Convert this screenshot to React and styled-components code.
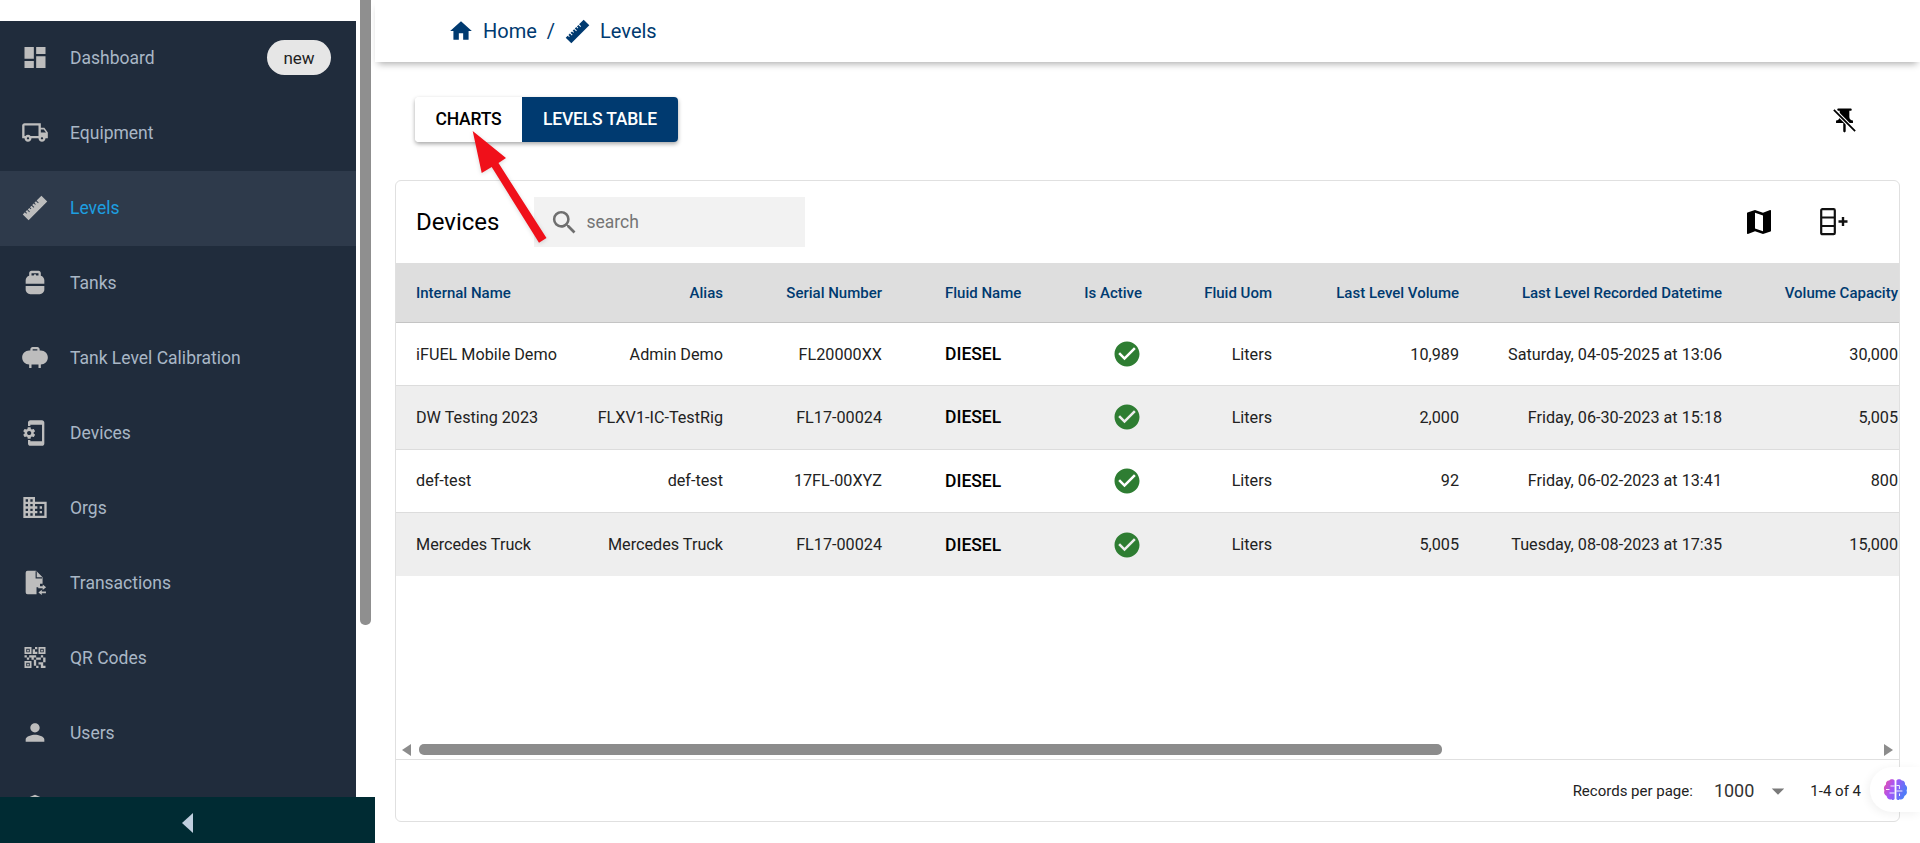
import React from "react";
import styled, { createGlobalStyle } from "styled-components";
import {
  MdDashboard,
  MdOutlineLocalShipping,
  MdPropaneTank,
  MdPropane,
  MdPhonelinkSetup,
  MdDomain,
  MdQrCode2,
  MdPerson,
  MdHome,
  MdMap,
  MdSearch,
  MdCheckCircle,
  MdArrowDropDown,
  MdLocalPolice,
} from "react-icons/md";

const GlobalStyle = createGlobalStyle`
  html, body {
    margin: 0;
    height: 100%;
    background: #fff;
    overflow: hidden;
    font-family: Roboto, "Liberation Sans", sans-serif;
  }
  * { box-sizing: border-box; }
`;

// thin ruler, small notches along its top edge; tilted by the parent
const RulerIcon = ({ size = 38 }) => (
  <svg width={size} height={size} viewBox="0 0 34 34" fill="currentColor">
    <path d="M1 12h3.6v2.4h1.2V12h2.6v3.6h1.2V12h2.6v2.4h1.2V12h2.6v3.6h1.2V12h2.6v2.4h1.2V12h2.6v3.6h1.2V12H33v10H1z" />
  </svg>
);

const FileSwapIcon = () => (
  <svg width="29" height="29" viewBox="0 0 24 24" fill="currentColor">
    <path d="M5.6 2H13l5.5 5.5V13h-2.2v3.1h-3V22H5.6A1.6 1.6 0 0 1 4 20.4V3.6A1.6 1.6 0 0 1 5.6 2z" />
    <path d="M13 2.4V8h5.1" fill="none" stroke="#202c3c" strokeWidth="1" />
    <path d="M18.6 13.8l2.9 2.3-2.9 2.3v-1.5h-3.8v-1.6h3.8zM17.8 18.2v1.5h3.6v1.6h-3.6v1.5l-2.9-2.3z" />
  </svg>
);

const PinOffIcon = () => (
  <svg width="29" height="29" viewBox="0 0 24 24">
    <path
      fill="#000"
      d="M16 9V4h1c.55 0 1-.45 1-1s-.45-1-1-1H7c-.55 0-1 .45-1 1s.45 1 1 1h1v5c0 1.66-1.34 3-3 3v2h5.97v7l1 1 1-1v-7H19v-2c-1.66 0-3-1.34-3-3z"
    />
    <path d="M3.5 3.5l17 17" stroke="#fff" strokeWidth="3.2" />
    <path d="M3.2 3.2l17.6 17.6" stroke="#000" strokeWidth="1.5" />
  </svg>
);

const AddRowsIcon = () => (
  <svg width="29" height="28" viewBox="0 0 29 28" fill="none" stroke="#111">
    <rect x="1.2" y="1.2" width="13.6" height="25" rx="1.2" strokeWidth="2.2" />
    <path d="M1 9.5h14M1 18h14" strokeWidth="2.2" />
    <path d="M18.5 13.5h9M23 9v9" strokeWidth="2.4" />
  </svg>
);

const BrainIcon = () => (
  <svg width="25" height="24" viewBox="0 0 25 24">
    <defs>
      <linearGradient id="brainFill" x1="0" y1="0" x2="1" y2="0.4">
        <stop offset="0" stopColor="#ec4fa0" />
        <stop offset="0.45" stopColor="#a855f7" />
        <stop offset="1" stopColor="#4f7cf7" />
      </linearGradient>
    </defs>
    <path
      fill="url(#brainFill)"
      d="M11.6 2.6C10.6.8 7.4.6 6.2 2.6 3.9 2.6 2.6 4.6 3 6.6 1 7.8.3 10.4 1.4 12.4.5 14.6 1.5 17 3.6 18c.2 2.4 2.6 4 4.8 3.2 1.2 1.4 3.2 1 3.2-.6V2.6zM13.4 2.6c1-1.8 4.2-2 5.4 0 2.3 0 3.6 2 3.2 4 2 1.2 2.7 3.8 1.6 5.8.9 2.2-.1 4.6-2.2 5.6-.2 2.4-2.6 4-4.8 3.2-1.2 1.4-3.2 1-3.2-.6V2.6z"
    />
    <path
      d="M11.6 8H7.5M11.6 15H6.5M3 11.5h3.5M13.4 7.5h3v3.5M13.4 13h6M16.5 18v-2.5"
      fill="none"
      stroke="#fff"
      strokeWidth="0.9"
    />
  </svg>
);

const menuItems = [
  { label: "Dashboard", Icon: MdDashboard, badge: "new" },
  { label: "Equipment", Icon: MdOutlineLocalShipping },
  { label: "Levels", Icon: RulerIcon, active: true, tilted: true, size: 38 },
  { label: "Tanks", Icon: MdPropaneTank },
  { label: "Tank Level Calibration", Icon: MdPropane },
  { label: "Devices", Icon: MdPhonelinkSetup, size: 30 },
  { label: "Orgs", Icon: MdDomain },
  { label: "Transactions", Icon: FileSwapIcon },
  { label: "QR Codes", Icon: MdQrCode2 },
  { label: "Users", Icon: MdPerson },
  { label: "", Icon: MdLocalPolice },
];

const columns = [
  { key: "name", label: "Internal Name", width: 181, align: "left" },
  { key: "alias", label: "Alias", width: 166, align: "right" },
  { key: "serial", label: "Serial Number", width: 159, align: "right" },
  { key: "fluid", label: "Fluid Name", width: 158, align: "left", inset: 43, strong: true },
  { key: "active", label: "Is Active", width: 102, align: "right", check: true },
  { key: "uom", label: "Fluid Uom", width: 130, align: "right" },
  { key: "volume", label: "Last Level Volume", width: 187, align: "right" },
  { key: "recorded", label: "Last Level Recorded Datetime", width: 263, align: "right" },
  { key: "capacity", label: "Volume Capacity", width: 176, align: "right" },
];

const rows = [
  {
    name: "iFUEL Mobile Demo",
    alias: "Admin Demo",
    serial: "FL20000XX",
    fluid: "DIESEL",
    uom: "Liters",
    volume: "10,989",
    recorded: "Saturday, 04-05-2025 at 13:06",
    capacity: "30,000",
  },
  {
    name: "DW Testing 2023",
    alias: "FLXV1-IC-TestRig",
    serial: "FL17-00024",
    fluid: "DIESEL",
    uom: "Liters",
    volume: "2,000",
    recorded: "Friday, 06-30-2023 at 15:18",
    capacity: "5,005",
  },
  {
    name: "def-test",
    alias: "def-test",
    serial: "17FL-00XYZ",
    fluid: "DIESEL",
    uom: "Liters",
    volume: "92",
    recorded: "Friday, 06-02-2023 at 13:41",
    capacity: "800",
  },
  {
    name: "Mercedes Truck",
    alias: "Mercedes Truck",
    serial: "FL17-00024",
    fluid: "DIESEL",
    uom: "Liters",
    volume: "5,005",
    recorded: "Tuesday, 08-08-2023 at 17:35",
    capacity: "15,000",
  },
];

const gridTemplate = columns.map((c) => `${c.width}px`).join(" ");

const App = () => {
  return (
    <Page>
      <GlobalStyle />
      <SideColumn>
        <SideScroll>
          <Menu>
            {menuItems.map(({ label, Icon, badge, active, tilted, size }, i) => (
              <MenuItem key={i} $active={active}>
                <MenuIcon $tilted={tilted}>
                  <Icon size={size || 29} />
                </MenuIcon>
                <MenuLabel $active={active}>{label}</MenuLabel>
                {badge && <Badge>{badge}</Badge>}
              </MenuItem>
            ))}
          </Menu>
          <ScrollTrack>
            <ScrollThumb />
          </ScrollTrack>
        </SideScroll>
        <CollapseBar>
          <CollapseArrow />
        </CollapseBar>
      </SideColumn>

      <Main>
        <TopBar>
          <MdHome size={26} color="#003a70" />
          <Crumb>Home</Crumb>
          <CrumbSlash>/</CrumbSlash>
          <CrumbRuler>
            <RulerIcon size={27} />
          </CrumbRuler>
          <Crumb>Levels</Crumb>
        </TopBar>

        <Content>
          <ToggleRow>
            <ToggleGroup>
              <ToggleButton>CHARTS</ToggleButton>
              <ToggleButton $selected>LEVELS TABLE</ToggleButton>
            </ToggleGroup>
            <PinButton>
              <PinOffIcon />
            </PinButton>
          </ToggleRow>

          <Card>
            <CardHeader>
              <CardTitle>Devices</CardTitle>
              <SearchBox>
                <MdSearch size={31} color="#6f6f6f" />
                <SearchText>search</SearchText>
              </SearchBox>
              <CardActions>
                <MdMap size={32} color="#000" />
                <AddRowsIcon />
              </CardActions>
            </CardHeader>

            <TableHead>
              {columns.map((c) => (
                <HeadCell key={c.key} $align={c.align} $inset={c.inset}>
                  {c.label}
                </HeadCell>
              ))}
            </TableHead>
            {rows.map((row, i) => (
              <TableRow
                key={row.name}
                $striped={i % 2 === 1}
                $last={i === rows.length - 1}
              >
                {columns.map((c) => (
                  <Cell key={c.key} $align={c.align} $inset={c.inset} $strong={c.strong}>
                    {c.check ? <MdCheckCircle size={30} color="#2e7d32" /> : row[c.key]}
                  </Cell>
                ))}
              </TableRow>
            ))}
            <TableFill />

            <HScroll>
              <HArrow $dir="left" />
              <HThumb />
              <HArrow $dir="right" />
            </HScroll>

            <CardFooter>
              <FooterText>Records per page:</FooterText>
              <PageSize>1000</PageSize>
              <MdArrowDropDown size={30} color="#7a7a7a" />
              <PageCount>1-4 of 4</PageCount>
            </CardFooter>
          </Card>
        </Content>

        <Arrow viewBox="0 0 90 120" width="90" height="120">
          <path
            d="M2.7 1L11.7 43 21.7 37 69 112.7 76.5 108 28.5 33 36 28z"
            fill="#f0101a"
          />
        </Arrow>
        <BrainTab>
          <BrainIcon />
        </BrainTab>
      </Main>
    </Page>
  );
};

const Page = styled.div`
  display: flex;
  width: 1920px;
  height: 843px;
  overflow: hidden;
`;

const SideColumn = styled.aside`
  width: 375px;
  flex-shrink: 0;
  display: flex;
  flex-direction: column;
  height: 843px;
`;

const SideScroll = styled.div`
  flex: 1;
  display: flex;
  min-height: 0;
  overflow: hidden;
`;

const Menu = styled.nav`
  width: 356px;
  margin-top: 21px;
  background: #202c3c;
  flex-shrink: 0;
`;

const MenuItem = styled.div`
  height: 75px;
  display: flex;
  align-items: center;
  padding: 0 25px 2px 21px;
  background: ${(p) => (p.$active ? "#2e3a4b" : "transparent")};
`;

const MenuIcon = styled.span`
  width: 28px;
  height: 28px;
  display: flex;
  align-items: center;
  justify-content: center;
  flex-shrink: 0;
  color: #bdbdbd;
  margin-right: 21px;
  transform: ${(p) => (p.$tilted ? "rotate(-45deg)" : "none")};
`;

const MenuLabel = styled.span`
  flex: 1;
  font-size: 17.5px;
  color: ${(p) => (p.$active ? "#1d9fe0" : "#a9b7c6")};
`;

const Badge = styled.span`
  width: 64px;
  height: 35px;
  border-radius: 18px;
  background: #e6e6e6;
  color: #222;
  font-size: 17px;
  display: flex;
  align-items: center;
  justify-content: center;
`;

const ScrollTrack = styled.div`
  flex: 1;
  padding-left: 4px;
`;

const ScrollThumb = styled.div`
  width: 11px;
  height: 625px;
  background: #8f8f8f;
  border-radius: 0 0 5px 5px;
`;

const CollapseBar = styled.div`
  height: 46px;
  padding-top: 6px;
  background: #002b33;
  display: flex;
  align-items: center;
  justify-content: center;
  flex-shrink: 0;
`;

const CollapseArrow = styled.span`
  width: 0;
  height: 0;
  border-style: solid;
  border-width: 10.5px 11px 10.5px 0;
  border-color: transparent #c0cfdf transparent transparent;
`;

const Main = styled.main`
  flex: 1;
  min-width: 0;
  position: relative;
  display: flex;
  flex-direction: column;
`;

const TopBar = styled.header`
  height: 62px;
  display: flex;
  align-items: center;
  padding-left: 73px;
  color: #003a70;
  box-shadow: 0 5px 7px -3px rgba(0, 0, 0, 0.32);
`;

const Crumb = styled.span`
  font-size: 20px;
  margin-left: 9px;
`;

const CrumbSlash = styled.span`
  font-size: 20px;
  margin: 0 9px 0 10px;
`;

const CrumbRuler = styled.span`
  display: flex;
  color: #003a70;
  transform: rotate(-45deg);
`;

const Content = styled.div`
  flex: 1;
  min-height: 0;
  padding: 35px 20px 21px;
  display: flex;
  flex-direction: column;
`;

const ToggleRow = styled.div`
  display: flex;
  align-items: center;
  justify-content: space-between;
  padding: 0 41px 0 20px;
  height: 45px;
  margin-bottom: 38px;
`;

const ToggleGroup = styled.div`
  display: flex;
  border-radius: 4px;
  overflow: hidden;
  box-shadow: 0 2px 4px rgba(0, 0, 0, 0.35);
`;

const ToggleButton = styled.button`
  height: 45px;
  width: ${(p) => (p.$selected ? "156px" : "107px")};
  padding: 0 0 2px;
  border: 0;
  font-family: inherit;
  font-size: 17.5px;
  font-weight: 500;
  letter-spacing: -0.2px;
  background: ${(p) => (p.$selected ? "#003a70" : "#fff")};
  color: ${(p) => (p.$selected ? "#fff" : "#000")};
`;

const PinButton = styled.span`
  display: flex;
  padding-top: 2px;
`;

const Card = styled.section`
  flex: 1;
  min-height: 0;
  display: flex;
  flex-direction: column;
  border: 1px solid #e0e0e0;
  border-radius: 6px;
  overflow: hidden;
`;

const CardHeader = styled.div`
  height: 82px;
  flex-shrink: 0;
  display: flex;
  align-items: center;
  padding: 0 50px 0 20px;
`;

const CardTitle = styled.h2`
  margin: 0 35px 0 0;
  font-size: 24px;
  font-weight: 400;
  color: #000;
`;

const SearchBox = styled.div`
  width: 271px;
  height: 50px;
  background: #f2f2f2;
  display: flex;
  align-items: center;
  padding-left: 15px;
`;

const SearchText = styled.span`
  font-size: 17.5px;
  color: #757575;
  margin-left: 6px;
`;

const CardActions = styled.div`
  margin-left: auto;
  display: flex;
  align-items: center;
  gap: 45px;
`;

const TableHead = styled.div`
  display: grid;
  grid-template-columns: ${gridTemplate};
  height: 60px;
  flex-shrink: 0;
  background: #dedede;
  border-bottom: 1px solid #c4c4c4;
`;

const HeadCell = styled.div`
  display: flex;
  align-items: center;
  justify-content: ${(p) => (p.$align === "right" ? "flex-end" : "flex-start")};
  padding: 0 20px 0 ${(p) => p.$inset || 20}px;
  font-size: 15px;
  font-weight: 500;
  color: #003a70;
  white-space: nowrap;
`;

const TableRow = styled.div`
  display: grid;
  grid-template-columns: ${gridTemplate};
  height: 63.3px;
  flex-shrink: 0;
  background: ${(p) => (p.$striped ? "#eeeeee" : "#fff")};
  border-bottom: ${(p) => (p.$last ? "0" : "1px solid #dcdcdc")};
`;

const Cell = styled.div`
  display: flex;
  align-items: center;
  justify-content: ${(p) => (p.$align === "right" ? "flex-end" : "flex-start")};
  padding: 0 20px 0 ${(p) => p.$inset || 20}px;
  font-size: ${(p) => (p.$strong ? "17.5px" : "16.2px")};
  font-weight: ${(p) => (p.$strong ? 500 : 400)};
  color: ${(p) => (p.$strong ? "#000" : "#222")};
  white-space: nowrap;
`;

const TableFill = styled.div`
  flex: 1;
`;

const HScroll = styled.div`
  height: 11px;
  margin-bottom: 4px;
  flex-shrink: 0;
  display: flex;
  align-items: center;
  padding: 0 6px;
`;

const HArrow = styled.span`
  width: 0;
  height: 0;
  border-style: solid;
  border-width: ${(p) => (p.$dir === "left" ? "6.5px 9px 6.5px 0" : "6.5px 0 6.5px 9px")};
  border-color: ${(p) =>
    p.$dir === "left"
      ? "transparent #8c8c8c transparent transparent"
      : "transparent transparent transparent #8c8c8c"};
  margin-left: ${(p) => (p.$dir === "right" ? "auto" : "0")};
`;

const HThumb = styled.div`
  width: 1023px;
  height: 11px;
  margin-left: 8px;
  background: #8c8c8c;
  border-radius: 5px;
`;

const CardFooter = styled.div`
  height: 62px;
  flex-shrink: 0;
  border-top: 1px solid #e0e0e0;
  display: flex;
  align-items: center;
  justify-content: flex-end;
  padding-right: 38px;
`;

const FooterText = styled.span`
  font-size: 15px;
  color: #222;
`;

const PageSize = styled.span`
  font-size: 18px;
  color: #333;
  margin: 0 9px 0 21px;
`;

const PageCount = styled.span`
  font-size: 15px;
  color: #222;
  margin-left: 17px;
`;

const Arrow = styled.svg`
  position: absolute;
  left: 95px;
  top: 130px;
  filter: drop-shadow(0 1px 2px rgba(0, 0, 0, 0.15));
`;

const BrainTab = styled.div`
  position: absolute;
  right: 0;
  top: 767px;
  width: 50px;
  height: 45px;
  background: #fff;
  border-radius: 22px 0 0 22px;
  box-shadow: -2px 2px 10px rgba(0, 0, 0, 0.06);
  display: flex;
  align-items: center;
  justify-content: center;
`;

export default App;
